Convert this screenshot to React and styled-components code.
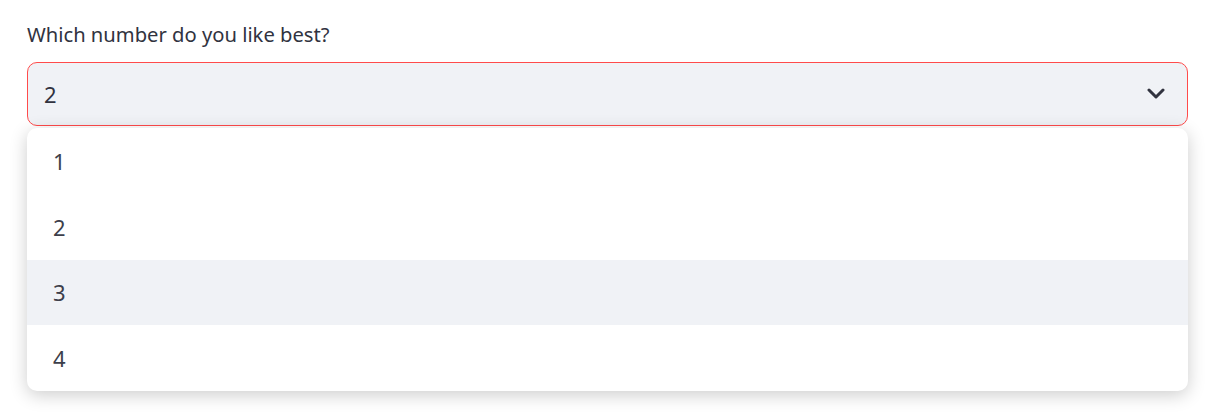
import React from "react";
import styled, { createGlobalStyle } from "styled-components";

const GlobalStyle = createGlobalStyle`
  body {
    margin: 0;
    background: #ffffff;
    font-family: "Noto Sans", "Open Sans", sans-serif;
    color: #31333f;
  }
`;

const Page = styled.div`
  padding: 20px 22px 0 27px;
  height: 415px;
  box-sizing: border-box;
`;

const Label = styled.label`
  display: block;
  font-size: 20.2px;
  line-height: 28px;
  color: #31333f;
  margin-bottom: 14px;
`;

const Select = styled.div`
  display: flex;
  align-items: center;
  justify-content: space-between;
  height: 64px;
  box-sizing: border-box;
  padding: 0 22px 0 16px;
  background: #f0f2f6;
  border: 1px solid #ff4b4b;
  border-radius: 10px;
  font-size: 22px;
  color: #31333f;
`;

const Menu = styled.ul`
  list-style: none;
  margin: 2px 0 0;
  padding: 0;
  background: #ffffff;
  border-radius: 10px;
  overflow: hidden;
  box-shadow: 0 4px 18px rgba(0, 0, 0, 0.2);
  position: relative;
`;

const Option = styled.li`
  height: 65.75px;
  display: flex;
  align-items: center;
  padding-left: 26px;
  font-size: 22px;
  color: #3d3f4b;
  background: ${(p) => (p.$active ? "#f0f2f6" : "transparent")};
`;

const Chevron = () => (
  <svg width="18" height="12" viewBox="0 0 18 12">
    <polyline
      points="2,2 9,9 16,2"
      fill="none"
      stroke="#31333f"
      strokeWidth="3"
      strokeLinecap="round"
      strokeLinejoin="round"
    />
  </svg>
);

const options = ["1", "2", "3", "4"];

export default function App() {
  return (
    <>
      <GlobalStyle />
      <Page>
        <Label>Which number do you like best?</Label>
        <Select>
          <span>2</span>
          <Chevron />
        </Select>
        <Menu>
          {options.map((o) => (
            <Option key={o} $active={o === "3"}>
              {o}
            </Option>
          ))}
        </Menu>
      </Page>
    </>
  );
}
